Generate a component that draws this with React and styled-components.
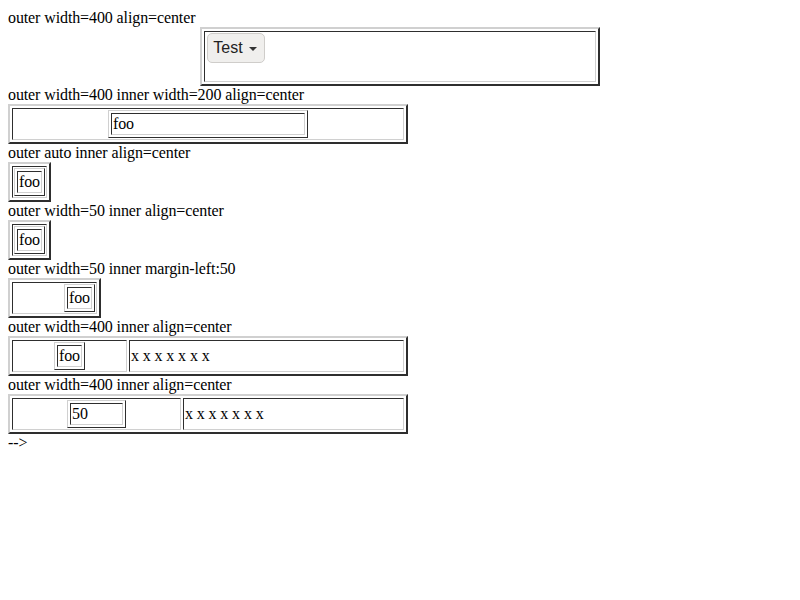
import styled, { createGlobalStyle } from "styled-components";

const GlobalStyle = createGlobalStyle`
  body {
    margin: 9px 8px 8px;
    font-family: "Liberation Serif", "Times New Roman", serif;
    font-size: 16px;
    letter-spacing: -0.11px;
    color: #000;
    background: #fff;
  }
`;

const LIGHT = "#d0d0d0";
const DARK = "#2e2e2e";

const Caption = styled.div`
  line-height: normal;
`;

// frame drawn like a border="2" table: light top/left, dark bottom/right
const OuterTable = styled.table`
  box-sizing: border-box;
  border-collapse: separate;
  border-spacing: 2px;
  border: 2px solid;
  border-color: ${LIGHT} ${DARK} ${DARK} ${LIGHT};
  width: ${(p) => (p.$width ? `${p.$width}px` : "auto")};
  margin: ${(p) => (p.$center ? "0 auto" : "0")};
  table-layout: ${(p) => (p.$fixed ? "fixed" : "auto")};
`;

const InnerTable = styled.table`
  box-sizing: border-box;
  border-collapse: separate;
  border-spacing: 2px;
  border: 1px solid;
  border-color: ${LIGHT} ${DARK} ${DARK} ${LIGHT};
  width: ${(p) => (p.$width ? `${p.$width}px` : "auto")};
  margin-left: ${(p) => (p.$center ? "auto" : p.$left ? `${p.$left}px` : "0")};
  margin-right: ${(p) => (p.$center ? "auto" : "0")};
`;

const Cell = styled.td`
  border: 1px solid;
  border-color: ${DARK} ${LIGHT} ${LIGHT} ${DARK};
  padding: 1px;
  vertical-align: ${(p) => (p.$top ? "top" : "middle")};
  width: ${(p) => (p.$w ? `${p.$w}px` : "auto")};
  height: ${(p) => (p.$h ? `${p.$h}px` : "auto")};
`;

const DropButton = styled.button`
  display: inline-flex;
  align-items: center;
  margin: 0 0 0 1px;
  padding: 0 7px 0 5px;
  height: 30px;
  font-family: "Liberation Sans", Arial, sans-serif;
  font-size: 16px;
  letter-spacing: 0;
  color: #222;
  background: #f0efed;
  border: 1px solid #cfcdca;
  border-radius: 5px;
`;

const Label = styled.span`
  width: 30px;
`;

const Caret = styled.span`
  width: 0;
  height: 0;
  margin-left: 6px;
  margin-top: 1px;
  border-top: 4px solid #333;
  border-left: 4px solid transparent;
  border-right: 4px solid transparent;
`;

function Foo({ text = "foo", ...rest }) {
  return (
    <InnerTable {...rest}>
      <tbody>
        <tr>
          <Cell>{text}</Cell>
        </tr>
      </tbody>
    </InnerTable>
  );
}

export default function App() {
  return (
    <>
      <GlobalStyle />
      <Caption>outer width=400 align=center</Caption>
      <OuterTable $width={400} $center>
        <tbody>
          <tr>
            <Cell $top $h={47}>
              <DropButton>
                <Label>Test</Label>
                <Caret />
              </DropButton>
            </Cell>
          </tr>
        </tbody>
      </OuterTable>

      <Caption>outer width=400 inner width=200 align=center</Caption>
      <OuterTable $width={400}>
        <tbody>
          <tr>
            <Cell>
              <Foo $width={200} $center />
            </Cell>
          </tr>
        </tbody>
      </OuterTable>

      <Caption>outer auto inner align=center</Caption>
      <OuterTable>
        <tbody>
          <tr>
            <Cell>
              <Foo $center />
            </Cell>
          </tr>
        </tbody>
      </OuterTable>

      <Caption>outer width=50 inner align=center</Caption>
      <OuterTable>
        <tbody>
          <tr>
            <Cell>
              <Foo $center />
            </Cell>
          </tr>
        </tbody>
      </OuterTable>

      <Caption>outer width=50 inner margin-left:50</Caption>
      <OuterTable>
        <tbody>
          <tr>
            <Cell>
              <Foo $left={50} />
            </Cell>
          </tr>
        </tbody>
      </OuterTable>

      <Caption>outer width=400 inner align=center</Caption>
      <OuterTable $width={400} $fixed>
        <tbody>
          <tr>
            <Cell $w={111}>
              <Foo $center />
            </Cell>
            <Cell>x x x x x x x</Cell>
          </tr>
        </tbody>
      </OuterTable>

      <Caption>outer width=400 inner align=center</Caption>
      <OuterTable $width={400} $fixed>
        <tbody>
          <tr>
            <Cell $w={165}>
              <Foo $center $width={59} text="50" />
            </Cell>
            <Cell>x x x x x x x</Cell>
          </tr>
        </tbody>
      </OuterTable>
      <Caption>--&gt;</Caption>
    </>
  );
}
